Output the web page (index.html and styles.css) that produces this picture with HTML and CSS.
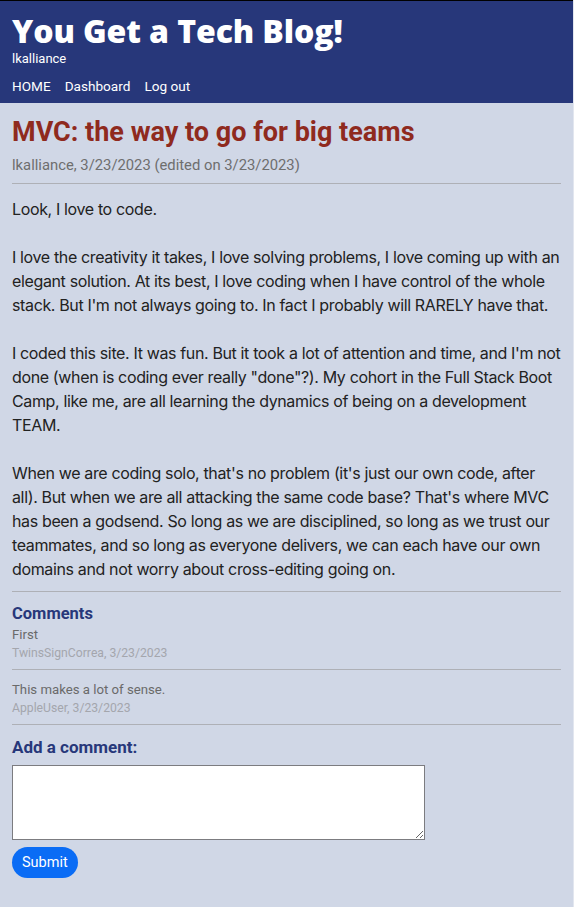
FILE: index.html
```html
<!DOCTYPE html>
<html lang="en">
<head>
<meta charset="utf-8">
<title>You Get a Tech Blog!</title>
<link rel="stylesheet" href="styles.css">
</head>
<body>
<header class="site-header">
  <h1 class="site-title">You Get a Tech Blog!</h1>
  <div class="site-user">lkalliance</div>
  <nav class="site-nav">
    <a href="#">HOME</a>
    <a href="#">Dashboard</a>
    <a href="#">Log out</a>
  </nav>
</header>
<main class="content">
  <article class="post">
    <h2 class="post-title">MVC: the way to go for big teams</h2>
    <div class="post-meta">lkalliance, 3/23/2023 (edited on 3/23/2023)</div>
    <hr class="rule">
    <p class="post-body">Look, I love to code.

I love the creativity it takes, I love solving problems, I love coming up with an elegant solution. At its best, I love coding when I have control of the whole stack. But I'm not always going to. In fact I probably will RARELY have that.

I coded this site. It was fun. But it took a lot of attention and time, and I'm not done (when is coding ever really "done"?). My cohort in the Full Stack Boot Camp, like me, are all learning the dynamics of being on a development TEAM.

When we are coding solo, that's no problem (it's just our own code, after all). But when we are all attacking the same code base? That's where MVC has been a godsend. So long as we are disciplined, so long as we trust our teammates, and so long as everyone delivers, we can each have our own domains and not worry about cross-editing going on.</p>
    <hr class="rule">
  </article>
  <section class="comments">
    <h3 class="section-title">Comments</h3>
    <div class="comment">
      <div class="comment-text">First</div>
      <div class="comment-meta">TwinsSignCorrea, 3/23/2023</div>
    </div>
    <hr class="rule">
    <div class="comment">
      <div class="comment-text">This makes a lot of sense.</div>
      <div class="comment-meta">AppleUser, 3/23/2023</div>
    </div>
    <hr class="rule">
  </section>
  <form class="comment-form">
    <h3 class="section-title add">Add a comment:</h3>
    <textarea class="comment-input"></textarea>
    <button type="button" class="submit">Submit</button>
  </form>
</main>
</body>
</html>
```

FILE: styles.css
```css
html, body {
  margin: 0;
  padding: 0;
}
body {
  background: #d0d7e6;
  font-family: Roboto, "Noto Sans", sans-serif;
  color: #222;
  min-height: 907px;
  border-right: 1px solid #e2e6ef;
  box-sizing: border-box;
}
.site-header {
  background: #27377a;
  border-top: 1px solid #000;
  padding: 10px 12px 9px;
  color: #fff;
}
.site-title {
  margin: 0;
  font-family: "Open Sans", sans-serif;
  font-weight: 800;
  font-size: 32px;
  line-height: 40px;
  letter-spacing: -0.1px;
}
.site-user {
  font-size: 13px;
  line-height: 16px;
}
.site-nav {
  display: flex;
  gap: 14px;
  margin-top: 11px;
}
.site-nav a {
  color: #fff;
  text-decoration: none;
  font-size: 13.6px;
  line-height: 16px;
}
.content {
  padding: 0 12px 30px;
}
.post-title {
  margin: 0;
  padding-top: 14px;
  font-size: 27px;
  line-height: 30px;
  font-weight: 700;
  color: #8f2a1e;
}
.post-meta {
  font-size: 14.8px;
  line-height: 18px;
  color: #6e6e6e;
  margin-top: 9px;
}
.rule {
  border: 0;
  border-top: 1px solid #aeb0b6;
  margin: 9px 0 0;
  height: 0;
}
.post-body {
  white-space: pre-line;
  margin: 13px 0 10px;
  font-family: Inter, Roboto, sans-serif;
  font-size: 16px;
  line-height: 24px;
  letter-spacing: -0.36px;
  color: #222;
}
.section-title {
  margin: 13px 0 0;
  font-size: 16.5px;
  line-height: 18px;
  font-weight: 700;
  color: #27377a;
}
.comment-text {
  font-size: 13.2px;
  line-height: 16px;
  color: #6a6a6a;
  margin-top: 4px;
}
.comment-meta {
  font-size: 12.2px;
  line-height: 16px;
  color: #a4a6ad;
  margin-top: 2px;
}
.comments .rule {
  margin: 8px 0 12px;
}
.comments .rule:last-child {
  margin-bottom: 0;
}
.section-title.add {
  margin-top: 13px;
  font-size: 17px;
}
.comment-input {
  display: block;
  width: 413px;
  height: 75px;
  box-sizing: border-box;
  margin-top: 9px;
  border: 1px solid #7c7c80;
  background: #fff;
  resize: vertical;
}
.submit {
  display: block;
  margin-top: 7px;
  background: #0a6cf5;
  color: #fff;
  border: 0;
  border-radius: 16px;
  height: 31px;
  padding: 0 10px;
  font-family: Roboto, sans-serif;
  font-size: 14.5px;
}
```
